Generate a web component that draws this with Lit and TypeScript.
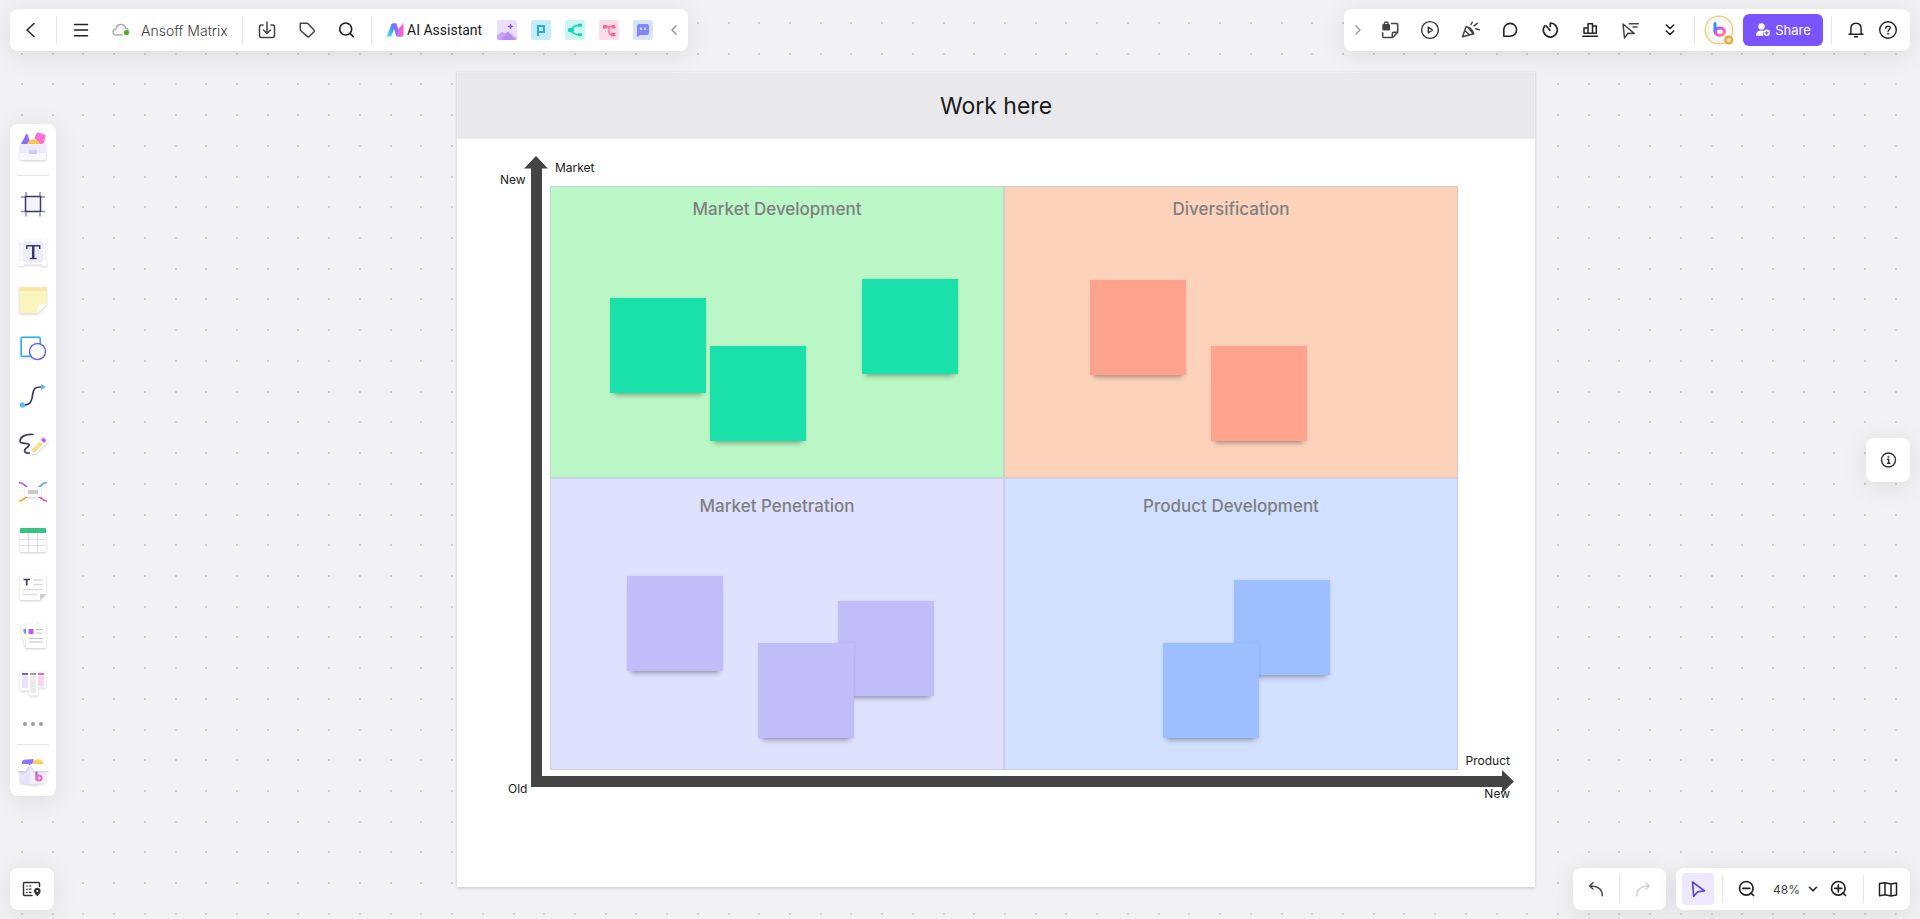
import { LitElement, html, svg, css, nothing } from "lit";
import type { TemplateResult } from "lit";
import { customElement, state } from "lit/decorators.js";
import { classMap } from "lit/directives/class-map.js";
import { styleMap } from "lit/directives/style-map.js";

const icon = (size: number, body: unknown, stroke = "#222222", width = 1.5) => html`
  <svg width=${size} height=${size} viewBox="0 0 ${size} ${size}" fill="none" stroke=${stroke}
    stroke-width=${width} stroke-linecap="round" stroke-linejoin="round" aria-hidden="true">${body}</svg>`;

const icons = {
  back: icon(20, svg`<path d="M13 3.500 6 10l7 6.500"/>`),
  menu: icon(20, svg`<path d="M3.500 4.500h13M3.500 10h13M3.500 15.700h13"/>`),
  cloud: icon(20, svg`<path d="M11 15H5.500C3.400 15 2 13.700 2 12c0-1.800 1.400-3 3-3.100C5.300 6.200 7.400 4.500 10 4.500c2.400 0 4.100 1.400 4.700 3.600 1.200.3 2.100.9 2.600 1.900" stroke="#a9a9ad" stroke-width="1.300"/><circle cx="15.500" cy="12.500" r="2.600" fill="#4caf20" stroke="none"/>`),
  download: icon(20, svg`<path d="M6 5H4.500Q2.500 5 2.500 7v8.500q0 2 2 2h11q2 0 2-2V7q0-2-2-2H14M10 2v11M6.500 10l3.500 3.500 3.500-3.500" stroke="#444"/>`),
  tag: icon(20, svg`<path d="M3.500 3.300h6.400q.8 0 1.400.6l5.700 6q.8.900 0 1.800l-4.800 4.900q-.8.800-1.600 0L3.900 10.700q-.6-.6-.6-1.400V4q0-.7.200-.7Z" stroke="#444"/>`),
  search: icon(20, svg`<circle cx="8.700" cy="9" r="6"/><path d="m13.200 13.600 3 3"/>`, "#222222", 1.700),
  collapse: icon(16, svg`<path d="M10 4 6 8l4 4"/>`, "#8c8c90", 1.400),
  expand: icon(16, svg`<path d="m7 4 4 4-4 4"/>`, "#9a9a9e", 1.400),
  lockNote: icon(20, svg`<path d="M11.500 3.500h5q1.200 0 1.200 1.200V12.300L12.700 17.500H4q-1.300 0-1.300-1.300v-3.500M17.500 12.300h-4q-1.200 0-1.200 1.200v4" stroke="#444"/><rect x="2.300" y="4" width="7.700" height="6.500" rx="1.300" fill="#444" stroke="none"/><path d="M4.300 5V3.800q0-1.800 1.900-1.800T8.100 3.800V5" stroke="#444" stroke-width="1.300"/>`),
  play: icon(20, svg`<circle cx="10" cy="10" r="8.400"/><path d="M8.300 7.200v5.600l4.200-2.800Z"/>`, "#333333", 1.400),
  party: icon(20, svg`<path d="M6 6.700 2.500 16.800l11.300-3.100q-1-3.600-3.800-5.600-1.900-1.400-4-1.400ZM4.700 10.500l4.700 4.300M8 7.200l5 6.300M12.200 2.300 11 4.300M17.300 3.300l-3.300 2.500M15.800 8.800l3.400 1"/>`, "#444444", 1.500),
  bubble: icon(20, svg`<path d="M3.800 16.200h6.400a6.400 6.400 0 1 0-6.400-6.400Z"/>`, "#222222", 1.600),
  timer: icon(20, svg`<path d="M10.300 3v3.500M10.300 3a7 7 0 1 1-5.700 2.900M6.200 6l3.800 4.200"/>`, "#222222", 1.700),
  chart: icon(20, svg`<path d="M2.800 16.200h14.700M4 13.200V8h4v5.200ZM8 13.200V3.700h4.500v9.500ZM12.500 13.200V6h3.800v7.200Z"/>`, "#222222", 1.500),
  present: icon(20, svg`<path d="m3 4 1.500 14 3.500-4.700 6.200.1ZM9.300 3.800h9M13 7h4"/>`, "#444444", 1.500),
  more: icon(20, svg`<path d="m6.300 5 3.700 3.500L13.700 5M6.300 11l3.700 3.500 3.700-3.500"/>`, "#222222", 1.600),
  bell: icon(20, svg`<path d="M3 14.300h14M4.900 14V8.500C4.900 5.300 7 3.200 10 3.200s5.100 2.100 5.100 5.300V14M8.500 16.800h3"/>`, "#222222", 1.500),
  help: icon(20, svg`<circle cx="10" cy="10" r="8.300"/><path d="M7.800 8.200q0-2.100 2.200-2.100t2.200 1.900q0 1-1.100 1.700-1 .7-1 1.600"/><circle cx="10.100" cy="13.800" r=".3" fill="#222"/>`, "#222222", 1.400),
  info: icon(20, svg`<circle cx="10.500" cy="10" r="7"/><path d="M9.500 9.300h1.200v4M9.500 13.300h2.400"/><circle cx="10.500" cy="6.700" r=".3" fill="#333"/>`, "#333333", 1.400),
  minimap: icon(20, svg`<path d="M17.500 7.500V4.500q0-1-1-1H2.500q-1 0-1 1v11q0 1 1 1H10"/><path d="M4.700 7h.6M7.300 7H9M4.700 10.200h.6M7.300 10.200H9M4.700 13.300h.6M7.300 13.300H9" stroke-width="1.200"/><path d="M15.300 8.700c-2 0-3.300 1.400-3.300 3.200 0 2.200 2 4 3.300 5.300 1.300-1.300 3.300-3.100 3.300-5.300 0-1.800-1.300-3.200-3.300-3.200Z" fill="#333" stroke="none"/><circle cx="15.300" cy="12" r="1" fill="#fff" stroke="none"/>`, "#333333", 1.500),
  undo: icon(20, svg`<path d="M7 3.800 3.500 7 7 10M4 7c7.500 0 12.300 3.300 12.300 9.800"/>`, "#444444", 1.500),
  redo: icon(20, svg`<path d="m13 3.800 3.500 3.200L13 10M16 7C8.500 7 3.700 10.300 3.700 16.800"/>`, "#d0d0d2", 1.500),
  pointer: icon(20, svg`<path d="m4.500 3 1.200 14.500 3.900-4.700 6.900-.9Z"/>`, "#5b3fd6", 1.600),
  zoomOut: icon(20, svg`<circle cx="9.300" cy="9.300" r="6.800"/><path d="M5.800 9.300h7M14.200 14.200l2.300 2.300"/>`, "#222222", 1.700),
  zoomIn: icon(20, svg`<circle cx="9.300" cy="9.300" r="6.800"/><path d="M5.800 9.300h7M9.300 5.800v7M14.200 14.200l2.300 2.300"/>`, "#222222", 1.700),
  caret: icon(10, svg`<path d="m1.500 3.300 3.500 3.500 3.500-3.500"/>`, "#222222", 1.600),
  map: icon(20, svg`<path d="M1.500 4.500 7 3.800l6 1.200 5.500-1v12L13 17l-6-1.200-5.500.9ZM7 3.800v12M13 5v12"/>`, "#222222", 1.500),
  addUser: icon(16, svg`<g fill="#fff" stroke="none"><circle cx="6.500" cy="4.500" r="3.200"/><path d="M1 13.500Q1 8.500 6.500 8.500q1.500 0 2.600.4-1.300 1.300-1.300 3t1 1.900H2Q1 13.800 1 13.500Z"/><circle cx="11.700" cy="10.800" r="3.200"/></g><path d="M10.200 10.800h3M11.700 9.300v3" stroke="#7a52ff" stroke-width="1.200"/>`),
};

const logo = {
  ai: html`<svg width="18" height="14" viewBox="0 0 18 14" aria-hidden="true">
    <defs><linearGradient id="a" x1="0" y1="1" x2="1" y2="0"><stop stop-color="#48efe0"/><stop offset=".6" stop-color="#3c9bff"/><stop offset="1" stop-color="#6b5cff"/></linearGradient></defs>
    <path d="M1 13 5.300 1.500Q5.700.5 6.700.5H10L5.800 12q-.5 1.500-1.800 1.500H1Q0 13.500 1 13Z" fill="url(#a)"/>
    <path d="M6.500.5h4L15 13.500h-3.500q-1 0-1.500-1Z" fill="#8a6dff"/>
    <path d="M12 6.500 17.500 0v12.500q0 1-1 1h-2Z" fill="#ff5fc8"/><path d="m12 6.500 2.500 7h-4Z" fill="#b678ff"/></svg>`,
  image: html`<svg width="20" height="20" viewBox="0 0 20 20" aria-hidden="true"><rect width="20" height="20" rx="2" fill="#eadffd"/>
    <path d="m0 16 5-4.500 2.500 2 3.500-2 9 7V18q0 2-2 2H2q-2 0-2-2Z" fill="#c8a4f8"/><path d="m7 16 4-4 7 8H4Z" fill="#b88af5"/>
    <path d="m13.500 3.500.9 2.100 2.100.9-2.100.9-.9 2.100-.9-2.100-2.100-.9 2.100-.9Z" fill="#8d4cf0"/></svg>`,
  ppt: html`<svg width="20" height="20" viewBox="0 0 20 20" aria-hidden="true"><rect width="20" height="20" rx="2" fill="#c6edff"/>
    <path d="M7 16V6h6v6H7" fill="none" stroke="#1fabf5" stroke-width="2"/></svg>`,
  mind: html`<svg width="20" height="20" viewBox="0 0 20 20" aria-hidden="true"><rect width="20" height="20" rx="2" fill="#ccf6f0"/>
    <path d="M14 5.500h-2Q8 6 6 10q2 4 6 4.500h2" fill="none" stroke="#13d3bd" stroke-width="1.500"/><ellipse cx="6" cy="10" rx="3.200" ry="2.300" fill="#13d3bd"/><rect x="12.500" y="3.800" width="4.500" height="3" rx="1" fill="#13d3bd"/><rect x="12.500" y="13.200" width="4.500" height="3" rx="1" fill="#13d3bd"/></svg>`,
  flow: html`<svg width="20" height="20" viewBox="0 0 20 20" aria-hidden="true"><rect width="20" height="20" rx="2" fill="#ffdbe8"/>
    <path d="M6 6.700h8M10 6.700V13q0 1.500 1.500 1.500H13" fill="none" stroke="#ff5f9b" stroke-width="1.300"/><g fill="#ff5f9b"><rect x="4" y="5" width="4" height="3.500" rx=".5"/><rect x="12.500" y="5" width="3.800" height="3.500" rx=".5"/><rect x="12" y="12.800" width="4.300" height="3.500" rx=".5"/></g></svg>`,
  chat: html`<svg width="20" height="20" viewBox="0 0 20 20" aria-hidden="true"><rect width="20" height="20" rx="2" fill="#d9e4ff"/>
    <path d="M4 6q0-2 2-2h8q2 0 2 2v7q0 2-2 2H7l-1.500 1.500H4Z" fill="#7f85ff"/><path d="M8 7.500V10M12 7.500V10" stroke="#fff" stroke-width="1.300"/></svg>`,
  avatar: html`<svg width="30" height="30" viewBox="0 0 30 30" aria-hidden="true">
    <defs><linearGradient id="b" x1="0" y1="0" x2="1" y2="1"><stop stop-color="#4f7dff"/><stop offset=".3" stop-color="#c45cf5"/><stop offset=".6" stop-color="#ff5cc0"/><stop offset="1" stop-color="#ff8a8b"/></linearGradient></defs>
    <circle cx="15" cy="15" r="13.800" fill="#fff" stroke="#f7c774" stroke-width="1.300"/><circle cx="15" cy="15" r="11" fill="none" stroke="#ececf0"/>
    <path d="M11 8.500v7.800" stroke="#2f8dff" stroke-width="3" stroke-linecap="round"/><ellipse cx="15.800" cy="16.700" rx="4.600" ry="3.700" fill="none" stroke="url(#b)" stroke-width="3.200"/>
    <circle cx="24.700" cy="25" r="4.600" fill="#eda63f"/><path d="m22.500 23.300 1.200.8 1-1.500 1 1.500 1.200-.8-.5 3.700h-3.400Z" fill="#fff3d8"/></svg>`,
};

const art = (body: unknown) => html`<svg class="art" width="34" height="34" viewBox="0 0 34 34" fill="none" aria-hidden="true">${body}</svg>`;

const tools: { name: string; art: TemplateResult }[] = [
  { name: "Frame", art: art(svg`<g stroke="#8d8bc0" stroke-width="1.500"><path d="M10 5v4M24 5v4M10 25.500v4M24 25.500v4M5 10h4M25 10h4M5 24.500h4M25 24.500h4"/></g><rect x="9.500" y="9.500" width="15" height="15" fill="#f2f2f8" stroke="#383b66" stroke-width="1.500"/>`) },
  { name: "Text", art: art(svg`<g class="lift"><rect x="5.500" y="5.500" width="23" height="23" fill="#ededf8" stroke="#fff" stroke-width="2"/><g fill="#fff"><rect x="3" y="3" width="5" height="5" rx="1"/><rect x="26" y="3" width="5" height="5" rx="1"/><rect x="3" y="26" width="5" height="5" rx="1"/><rect x="26" y="26" width="5" height="5" rx="1"/></g></g><path d="M10.800 14V10.700h12.900V14" stroke="#383b66" stroke-width="1.400"/><path d="M17.200 10.500v13" stroke="#383b66" stroke-width="2.500"/><path d="M13.800 23.500h6.800" stroke="#383b66" stroke-width="1.400"/>`) },
  { name: "Sticky note", art: art(svg`<g class="lift"><path d="M3.500 4h27v17.500l-9 9h-18Z" fill="#faf4bd"/><path d="M3.500 4h27v4h-27Z" fill="#f6e7a6"/><path d="M30.500 21.500h-7q-2 0-2 2v7Z" fill="#fff"/></g>`) },
  { name: "Shape", art: art(svg`<g class="lift"><rect x="5.200" y="6.200" width="19" height="19" rx="1" fill="#fff" stroke="#27b0e0" stroke-width="1.500"/></g><circle cx="21.500" cy="20.500" r="8" fill="#fff" stroke="#6963f5" stroke-width="1.500"/>`) },
  { name: "Connector", art: art(svg`<path d="M7 26c7 0 8.500-2.500 9.500-9.500S19 8 25 8" stroke="#383b66" stroke-width="1.700"/><circle cx="6.500" cy="26" r="2.700" fill="#55bdfb"/><path d="M25 5v6l5-3Z" fill="#55bdfb"/>`) },
  { name: "Pen", art: art(svg`<path d="M17 7.500C10 6.500 4 10 4 14c0 4 8 1 9 3.500s-5 3.500-4.500 6.500c.3 2 3 2.500 5.500 2" stroke="#383b66" stroke-width="1.700" stroke-linecap="round"/><g class="lift"><path d="m13.500 27.500 1.300-7L27.500 9l5 5-12.500 12.500Z" fill="#fff"/></g><path d="m17.500 25.500-1.500-2.500L24 15l2.500 2.500-8 7.500Z" fill="#f5df8b" stroke="#f5df8b"/><path d="m25 13 2.500-2.500 3 3-2.500 2.500Z" fill="#b65cf0"/>`) },
  { name: "Mind map", art: art(svg`<g stroke-width="1.700"><path d="M3 7.500c5 0 6 4 8.500 4.500" stroke="#b05ce8"/><path d="M31 7.500c-5 0-6 4-8.500 4.500" stroke="#4fa3f7"/><path d="M3 26c5 0 6-4 8.500-4.500" stroke="#f9a62b"/><path d="M31 26c-5 0-6-4-8.500-4.500" stroke="#ee5a97"/></g><g class="lift"><rect x="9" y="12" width="16" height="10" rx="1.500" fill="#fff"/></g><rect x="12" y="15" width="10" height="4" fill="#c9c9ce"/>`) },
  { name: "Table", art: art(svg`<g class="lift"><rect x="4" y="5" width="26" height="24" rx="1" fill="#fff"/></g><path d="M4 10V6q0-1 1-1h24q1 0 1 1v4Z" fill="#36c281"/><path d="M4 16.500h26M4 22.500h26M12.500 10v19M21.500 10v19" stroke="#dedee2"/>`) },
  { name: "Document", art: art(svg`<g class="lift"><path d="M4 4h26v19l-6 6H4Z" fill="#fff"/></g><path d="M30 23h-6v6Z" fill="#c9c9d0"/><path d="M7.500 8.500h6.500M10.700 8v6.500" stroke="#383b66" stroke-width="1.700"/><path d="M17 9h10M17 13.500h10M7 18.500h20M7 23.500h14" stroke="#dcdce0" stroke-width="1.300"/>`) },
  { name: "Cards", art: art(svg`<g class="lift"><path d="m4 6 17-4 5 22-17 4Z" fill="#fff"/></g><path d="m7 10.500 4-1v5H8Z" fill="#5aa4ee"/><g class="lift"><rect x="10" y="5" width="20" height="24" rx="1" fill="#fff"/></g><rect x="12.500" y="10" width="5" height="5" fill="#bf5cf0"/><path d="M20 10.500h7M20 14h6M13 19.500h14M13 23h14" stroke="#c4c4c8" stroke-width="1.200"/>`) },
  { name: "Kanban", art: art(svg`<g class="lift"><path d="M4 4.500h26v16h-8v8h-9v-5H4Z" fill="#fff"/></g><path d="M6 9h6v12H6Z" fill="#e9e3ff"/><path d="M14 9h6v17h-6Z" fill="#ebebee"/><path d="M22 9h6v10h-6Z" fill="#ffd3ef"/><path d="M6 7h6" stroke="#7855fa" stroke-width="2"/><path d="M14 7h6" stroke="#9d9da2" stroke-width="2"/><path d="M22 7h6" stroke="#fa5cc0" stroke-width="2"/>`) },
];

const templatesArt = art(svg`<path d="M5 14 10 4.500q.5-1 1.500-.5l3 10v1H5Z" fill="#8a6cff"/><path d="m18.500 8 2-4.500Q21 2 22.500 2.500l6 2q1.500.5 1 2L28 13l-4 2Z" fill="#ff6fd8"/><path d="M11 15c0-7.500 13-7.500 13 0Z" fill="#ffc54d"/><g class="lift"><path d="M4 14h26v14q0 2-2 2H6q-2 0-2-2Z" fill="#eeebff"/></g><path d="M4 23h26v5q0 2-2 2H6q-2 0-2-2Z" fill="#f8f7fe"/><rect x="13" y="20" width="8" height="4" fill="#d4caff"/>`);
const boxArt = art(svg`<path d="M6 10V7q0-2 2-2.300L17.500 4V10Z" fill="#8a76ff"/><path d="M16 10c1-8 11-7 12 0Z" fill="#ffcf58"/><g class="lift"><path d="M4 12h26v15l-12 3-14-2Z" fill="#e8e4ff"/></g><path d="M14 12h16v16l-16 1Z" fill="#f3f1ff"/><g class="lift"><path d="M5 9h8l-3 7H1ZM14 9h15l4 7H18Z" fill="#fff"/></g><path d="M20.500 17.500v7" stroke="#7a66ff" stroke-width="2" stroke-linecap="round"/><circle cx="23" cy="23" r="2.600" stroke="#f462c8" stroke-width="2"/>`);

interface Quadrant { title: string; tone: string; }
const quadrants: Quadrant[] = [
  { title: "Market Development", tone: "green" },
  { title: "Diversification", tone: "orange" },
  { title: "Market Penetration", tone: "violet" },
  { title: "Product Development", tone: "blue" },
];

// Note positions, in pixels from the frame's top-left corner.
const notes = [
  { tone: "green", x: 153, y: 226 },
  { tone: "green", x: 253, y: 274 },
  { tone: "green", x: 405, y: 207 },
  { tone: "orange", x: 633, y: 208 },
  { tone: "orange", x: 754, y: 274 },
  { tone: "violet", x: 170, y: 504 },
  { tone: "violet", x: 381, y: 529 },
  { tone: "violet", x: 301, y: 571 },
  { tone: "blue", x: 777, y: 508 },
  { tone: "blue", x: 706, y: 571 },
];

@customElement("board-frame")
export class BoardFrame extends LitElement {
  static styles = css`
    :host { display: block; background: #ffffff; box-shadow: 0 1px 3px rgba(0, 0, 0, 0.18); color: #1a1a1a; }
    h1 { margin: 0; height: 67px; box-sizing: border-box; background: #e9e9ed; border: 1px solid #efeff0; font-size: 23px; line-height: 66px; font-weight: 400; text-align: center; }
    .matrix { margin: 47px 77px 117px 93px; display: grid; grid-template-columns: 1fr 1fr; grid-auto-rows: 292px; }
    .cell { box-shadow: inset 0 0 0 1px rgba(190, 190, 205, 0.5); text-align: center; padding-top: 16px; }
    .cell:nth-child(-n + 2) { padding-top: 11px; }
    h2 { margin: 0; font-size: 17px; line-height: 24px; font-weight: 500; color: #7f7f7f; }
    .cell.green { background: #bbf7c6; }
    .cell.orange { background: #fcd2bb; }
    .cell.violet { background: #e0e0ff; }
    .cell.blue { background: #d1e0ff; }
    .note { position: absolute; width: 96px; height: 95px; box-shadow: 0 6px 5px -4px rgba(0, 0, 0, 0.32), 0 0 3px rgba(0, 0, 0, 0.08); }
    .note.green { background: #1ae0a9; }
    .note.orange { background: #ffa38f; }
    .note.violet { background: #c2bdf9; }
    .note.blue { background: #9dbfff; }
    .axes { position: absolute; left: 0; top: 0; }
    .label { position: absolute; font-size: 12px; line-height: 16px; }
    .y-name { left: 98px; top: 88px; }
    .y-new { left: 43px; top: 100px; }
    .origin { left: 51px; top: 709px; }
    .x-name { right: 25px; top: 681px; }
    .x-new { right: 25px; top: 714px; }
  `;

  render() {
    return html`
      <h1>Work here</h1>
      <div class="matrix">
        ${quadrants.map((q) => html`<section class="cell ${q.tone}"><h2>${q.title}</h2></section>`)}
      </div>
      <svg class="axes" width="1078" height="815" aria-hidden="true">
        <path d="M79 84 91 96.500H85V704H1045V698L1057 709.500 1045 721V715H74V96.500H67Z" fill="#444444"/>
      </svg>
      <span class="label y-name">Market</span>
      <span class="label y-new">New</span>
      <span class="label origin">Old</span>
      <span class="label x-name">Product</span>
      <span class="label x-new">New</span>
      ${notes.map((n) => html`<div class="note ${n.tone}" style=${styleMap({ left: `${n.x}px`, top: `${n.y}px` })}></div>`)}
    `;
  }
}

@customElement("app-root")
export class AppRoot extends LitElement {
  @state() private zoom = 48;
  private onResize = () => this.requestUpdate();

  connectedCallback() {
    super.connectedCallback();
    window.addEventListener("resize", this.onResize);
  }

  disconnectedCallback() {
    window.removeEventListener("resize", this.onResize);
    super.disconnectedCallback();
  }

  static styles = css`
    :host { display: block; position: relative; height: 100vh; overflow: hidden; background: #f2f2f4; font-family: Inter, "Liberation Sans", sans-serif; font-size: 14px; color: #1a1a1a; }
    svg { display: block; flex: none; }
    .dots { position: absolute; inset: 0; width: 100%; height: 100%; }
    .frame { position: absolute; left: 457px; top: 72px; width: 1078px; }
    .chrome { position: relative; box-sizing: border-box; height: 100%; padding: 9px 10px; display: grid; grid-template-rows: auto 1fr auto; pointer-events: none; }
    .row { display: flex; justify-content: space-between; align-items: center; }
    .cluster { display: flex; gap: 10px; }
    .bar { display: flex; align-items: center; height: 42px; background: #ffffff; border-radius: 8px; box-shadow: 0 4px 24px rgba(34, 34, 60, 0.1); pointer-events: auto; }
    button { display: flex; align-items: center; justify-content: center; width: 40px; height: 32px; padding: 0; border: 0; border-radius: 4px; background: none; font: inherit; color: inherit; cursor: pointer; }
    .divider { width: 1px; height: 28px; margin: 0 4px; background: #e4e4e8; }
    .wide { margin: 0 8px; }
    .tight { margin: 0; }
    .w26 { width: 26px; }
    .w28 { width: 28px; margin-left: 7px; }
    .w32 { width: 32px; }
    .w42 { width: 42px; }
    .w46 { width: 46px; }
    .title { width: 137px; padding-left: 10px; gap: 10px; justify-content: flex-start; color: #3c3c40; font-weight: 300; }
    .assistant { width: 121px; padding-left: 10px; gap: 3px; justify-content: flex-start; font-family: Roboto, Inter, sans-serif; }
    .apps { display: flex; gap: 14px; }
    .apps button { width: 20px; }
    .share { width: 80px; margin-left: 4px; gap: 4px; border-radius: 6px; background: #7a55ff; color: #ffffff; font-size: 13px; }
    .account { padding-right: 6px; }
    .middle { display: flex; justify-content: space-between; align-items: center; }
    .rail { width: 46px; height: auto; flex-direction: column; }
    .rail button { width: 46px; height: 48px; }
    .rail .end { height: 47px; }
    .rail .more { height: 32px; gap: 4px; }
    .more i { width: 4px; height: 4px; border-radius: 50%; background: #9d9d9f; }
    .rail .divider { width: 32px; height: 1px; margin: 4px 0; }
    .square { width: 44px; justify-content: center; }
    .info { height: 44px; }
    .lift { filter: drop-shadow(0 1px 1px rgba(30, 30, 60, 0.22)); }
    .art { overflow: visible; }
    .view { padding: 0 6px; box-sizing: border-box; }
    .active { background: #ede8fe; }
    .zoom { display: grid; width: 60px; align-items: center; }
    .zoom > * { grid-area: 1 / 1; }
    .zoom svg { justify-self: end; margin-right: 5px; pointer-events: none; }
    select { appearance: none; border: 0; background: none; font: inherit; font-size: 12px; color: #3c3c40; padding: 0 0 0 10px; height: 32px; cursor: pointer; }
  `;

  private dots(): string {
    const step = (64 * this.zoom) / 100;
    const marks: string[] = [];
    for (let y = 22; y < window.innerHeight; y += step) {
      for (let x = 22; x < window.innerWidth; x += step) {
        marks.push(`M${Math.round(x) - 1} ${Math.round(y)}h2v2h-2Z`);
      }
    }
    return marks.join("");
  }

  private button(name: string, glyph: unknown, size = "") {
    return html`<button class=${size || nothing} aria-label=${name}>${glyph}</button>`;
  }

  render() {
    return html`
      <svg class="dots" aria-hidden="true"><path d=${this.dots()} fill="#cdcdd0"/></svg>
      <board-frame class="frame"></board-frame>
      <div class="chrome">
        <header class="row">
          <div class="bar">
            ${this.button("Back", icons.back, "w42")}
            <span class="divider"></span>
            ${this.button("Menu", icons.menu)}
            <button class="title">${icons.cloud}Ansoff Matrix</button>
            <span class="divider"></span>
            ${this.button("Export", icons.download)}
            ${this.button("Tags", icons.tag)}
            ${this.button("Search", icons.search)}
            <span class="divider"></span>
            <button class="assistant">${logo.ai}AI Assistant</button>
            <div class="apps">
              ${this.button("AI image", logo.image)}
              ${this.button("AI slides", logo.ppt)}
              ${this.button("AI mind map", logo.mind)}
              ${this.button("AI flowchart", logo.flow)}
              ${this.button("AI chat", logo.chat)}
            </div>
            ${this.button("Collapse", icons.collapse, "w28")}
          </div>
          <div class="bar account">
            ${this.button("Expand", icons.expand, "w26")}
            ${this.button("Private notes", icons.lockNote)}
            ${this.button("Present", icons.play)}
            ${this.button("Celebrate", icons.party)}
            ${this.button("Comment", icons.bubble)}
            ${this.button("Timer", icons.timer)}
            ${this.button("Vote", icons.chart)}
            ${this.button("Follow cursor", icons.present)}
            ${this.button("More", icons.more)}
            <span class="divider"></span>
            ${this.button("Account", logo.avatar)}
            <button class="share">${icons.addUser}Share</button>
            <span class="divider wide"></span>
            ${this.button("Notifications", icons.bell, "w32")}
            ${this.button("Help", icons.help, "w32")}
          </div>
        </header>
        <div class="middle">
          <nav class="bar rail" aria-label="Tools">
            ${this.button("Templates", templatesArt, "end")}
            <span class="divider"></span>
            ${tools.map((t) => this.button(t.name, t.art))}
            <button class="more" aria-label="More tools"><i></i><i></i><i></i></button>
            <span class="divider"></span>
            ${this.button("Resources", boxArt, "end")}
          </nav>
          <div class="bar square info">${this.button("Info", icons.info)}</div>
        </div>
        <footer class="row">
          <div class="bar square">${this.button("Minimap", icons.minimap)}</div>
          <div class="cluster">
            <div class="bar">
              ${this.button("Undo", icons.undo, "w46")}
              <span class="divider tight"></span>
              ${this.button("Redo", icons.redo, "w46")}
            </div>
            <div class="bar view">
              <button class=${classMap({ w32: true, active: true })} aria-label="Select">${icons.pointer}</button>
              <span class="divider wide"></span>
              ${this.button("Zoom out", icons.zoomOut, "w32")}
              <div class="zoom">
                <select aria-label="Zoom level"><option>${this.zoom}%</option></select>
                ${icons.caret}
              </div>
              ${this.button("Zoom in", icons.zoomIn, "w32")}
              <span class="divider wide"></span>
              ${this.button("Guide", icons.map, "w32")}
            </div>
          </div>
        </footer>
      </div>
    `;
  }
}
